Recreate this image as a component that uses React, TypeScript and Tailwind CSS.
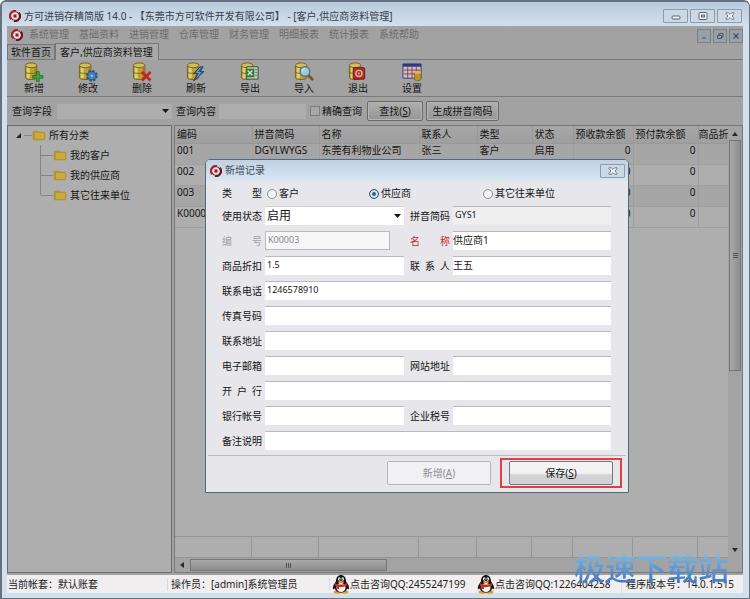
import { useState } from "react";
import type { ReactNode } from "react";
import clsx from "clsx";

const menus = ["系统管理", "基础资料", "进销管理", "仓库管理", "财务管理", "明细报表", "统计报表", "系统帮助"];

const columns = [
  { label: "编码", width: "w-[77px]" },
  { label: "拼音简码", width: "w-[67px]" },
  { label: "名称", width: "w-[100px]" },
  { label: "联系人", width: "w-[58px]" },
  { label: "类型", width: "w-[55px]" },
  { label: "状态", width: "w-[41px]" },
  { label: "预收款余额", width: "w-[60px]" },
  { label: "预付款余额", width: "w-[65px]" },
  { label: "商品折", width: "" },
];

const rows = [
  ["001", "DGYLWYGS", "东莞有利物业公司", "张三", "客户", "启用", "0", "0", ""],
  ["002", "", "", "", "", "", "0", "0", ""],
  ["003", "", "", "", "", "", "0", "0", ""],
  ["K00002", "", "", "", "", "", "0", "0", ""],
];

function Logo() {
  return (
    <svg viewBox="0 0 24 24" className="size-3 shrink-0" aria-hidden="true">
      <circle cx="12" cy="12" r="9" fill="#e8e2e5" />
      <path d="M14 2.500A9.500 9.500 0 0 0 5 18.500" fill="none" stroke="#a81f2e" strokeWidth="4.500" />
      <path d="M10 21.500A9.500 9.500 0 0 0 19 5.500" fill="none" stroke="#6d1321" strokeWidth="4.500" />
      <path d="M4 17l5 1v4ZM20 7l-5-1V2Z" fill="#8b1724" />
      <path d="M9 9h6v6H9z" fill="#8b1724" />
    </svg>
  );
}

function Cylinder() {
  return (
    <>
      <path d="M1.500 4v12.500c0 2.500 12 2.500 12 0V4Z" fill="#bfa12f" stroke="#75631f" />
      <path d="M4.500 5v12" stroke="#dfcf7c" strokeWidth="3" />
      <path d="M12 5v12" stroke="#a18524" strokeWidth="2" />
      <ellipse cx="7.500" cy="3.500" rx="6" ry="2.500" fill="#d2bd58" stroke="#75631f" />
      <path d="M1.500 10.500c0 2 12 2 12 0" fill="none" stroke="#80691a" />
    </>
  );
}

const tools: { label: string; icon: ReactNode }[] = [
  {
    label: "新增",
    icon: (
      <>
        <Cylinder />
        <path d="M13 10h3v4h4v3h-4v4h-3v-4H9v-3h4Z" fill="#3fa33c" stroke="#1d6023" strokeWidth=".7" />
      </>
    ),
  },
  {
    label: "修改",
    icon: (
      <>
        <Cylinder />
        <circle cx="14.500" cy="14.500" r="5" fill="none" stroke="#285b91" strokeWidth="2.500" strokeDasharray="2.400 1.500" />
        <circle cx="14.500" cy="14.500" r="4.300" fill="#4a8ac6" stroke="#214e80" />
        <circle cx="14.500" cy="14.500" r="1.700" fill="#bac6cd" stroke="#214e80" strokeWidth=".6" />
      </>
    ),
  },
  {
    label: "删除",
    icon: (
      <>
        <Cylinder />
        <path d="m10.500 10.500 9 9m0-9-9 9" stroke="#bd2a1e" strokeWidth="3" />
      </>
    ),
  },
  {
    label: "刷新",
    icon: (
      <>
        <Cylinder />
        <path d="M15 5 8 12h4l-4 8 11-10h-4l3-5Z" fill="#3464a5" stroke="#18345f" strokeWidth=".8" />
        <path d="m15 6-4 5h4l-3 5" fill="none" stroke="#94b5d2" strokeWidth=".8" />
      </>
    ),
  },
  {
    label: "导出",
    icon: (
      <>
        <Cylinder />
        <path d="M7 5h12v13H7Z" fill="#c1c9bc" stroke="#27592b" />
        <path d="M6 7h9v9H6Z" fill="#34753b" />
        <path d="m8 9 5 5m0-5-5 5" stroke="#dce6d8" strokeWidth="1.500" />
        <path d="M16 8h2m-2 3h2m-2 3h2" stroke="#527c4e" />
      </>
    ),
  },
  {
    label: "导入",
    icon: (
      <>
        <Cylinder />
        <path d="m15 14 5 5" stroke="#80552c" strokeWidth="3" />
        <circle cx="11.500" cy="10" r="5" fill="#a3c7d7" stroke="#477a9b" strokeWidth="1.500" />
        <path d="M8.500 10a3 3 0 0 1 3-3" fill="none" stroke="#e1eef0" />
      </>
    ),
  },
  {
    label: "退出",
    icon: (
      <>
        <Cylinder />
        <rect x="5.500" y="6" width="12" height="12" rx="1" fill="#b42c20" stroke="#71170f" />
        <circle cx="11.500" cy="12" r="3.200" fill="none" stroke="#dcb2aa" strokeWidth="1.500" />
        <circle cx="11.500" cy="12" r="1" fill="#dcb2aa" />
      </>
    ),
  },
  {
    label: "设置",
    icon: (
      <>
        <path d="M1 2h19v15H1Z" fill="#c8c3c8" stroke="#263d83" />
        <path d="M1 2h19v3H1Z" fill="#263d83" />
        <path d="M2 8.500h17M2 12.500h17M6 5v12M10.500 5v12M15 5v12" stroke="#a3353c" />
        <path d="M13 11v7c0 2 7 2 7 0v-7Z" fill="#be9323" stroke="#77591a" strokeWidth=".7" />
        <ellipse cx="16.500" cy="11" rx="3.500" ry="1.500" fill="#d8bb50" />
      </>
    ),
  },
];

function Folder() {
  return (
    <svg viewBox="0 0 14 11" className="h-[11px] w-[14px] shrink-0" aria-hidden="true">
      <path d="M1 2q0-1 1-1h4l1 1h5q1 0 1 1v6q0 1-1 1H2q-1 0-1-1Z" fill="#b6972e" stroke="#a58b3a" strokeWidth=".5" />
      <path d="M3 3h9v6H3Z" fill="#c9aa3a" />
    </svg>
  );
}

function Penguin() {
  return (
    <svg viewBox="0 0 18 20" className="h-5 w-[18px] shrink-0" aria-hidden="true">
      <ellipse cx="5.500" cy="18" rx="4" ry="1.700" fill="#e79b1d" />
      <ellipse cx="12.500" cy="18" rx="4" ry="1.700" fill="#e79b1d" />
      <path d="M4 7C4-1 14-1 14 7c0 1 4 5 3 8-1 1-2-1-2-1 0 6-12 6-12 0 0 0-1 2-2 1-1-3 3-7 3-8Z" fill="#15161a" />
      <ellipse cx="9" cy="13.500" rx="4.500" ry="4.500" fill="#f6f6f4" />
      <ellipse cx="7.300" cy="5" rx="1.300" ry="1.800" fill="#fff" />
      <ellipse cx="10.700" cy="5" rx="1.300" ry="1.800" fill="#fff" />
      <circle cx="7.700" cy="5.200" r=".6" />
      <circle cx="10.300" cy="5.200" r=".6" />
      <ellipse cx="9" cy="8" rx="3" ry="1" fill="#efaa20" />
      <path d="M3 9c3 2 9 2 12 0v2.500c-3 1.500-6 2-8 1.500V15H5v-2.500L3 11.500Z" fill="#d12825" />
    </svg>
  );
}

function CloseGlyph() {
  return (
    <svg viewBox="0 0 12 10" className="h-2 w-[10px]" aria-hidden="true">
      <path d="M1 1h3l2 2 2-2h3v1L8.500 5 11 8v1H8L6 7 4 9H1V8l2.500-3L1 2Z" fill="#f3f6f9" stroke="#56616e" />
    </svg>
  );
}

const captionButton =
  "flex h-[14px] w-[25px] items-center justify-center rounded-[1px] border border-[#8d9bab] bg-[#cbd8e6]";

function TitleBar() {
  return (
    <header className="flex h-6 items-center justify-between bg-linear-to-b from-[#b9cbdc] to-[#d2dfec] pt-1 pr-[7px] pl-[7px]">
      <div className="flex items-center gap-[3px] text-[#35404c]">
        <Logo />
        <h1 className="whitespace-pre">方可进销存精简版 14.0 - 【东莞市方可软件开发有限公司】 - [客户,供应商资料管理]</h1>
      </div>
      <div className="flex gap-0.5">
        <button type="button" aria-label="最小化" className={captionButton}>
          <svg viewBox="0 0 10 8" className="h-2 w-[10px]">
            <rect x="1" y="4" width="8" height="3" rx="1" fill="#f3f6f9" stroke="#56616e" />
          </svg>
        </button>
        <button type="button" aria-label="最大化" className={captionButton}>
          <svg viewBox="0 0 10 8" className="h-2 w-[10px]">
            <rect x="1" y=".5" width="8" height="7" rx="1" fill="#f3f6f9" stroke="#56616e" />
            <rect x="3.500" y="3" width="3" height="2" fill="#c4d0dd" stroke="#56616e" />
          </svg>
        </button>
        <button type="button" aria-label="关闭" className={captionButton}>
          <CloseGlyph />
        </button>
      </div>
    </header>
  );
}

const childButton = "flex h-[14px] w-[14px] items-center justify-center border border-[#7c838b] bg-[#98a0a9]";

function MenuBar() {
  return (
    <div className="flex h-[17px] items-center justify-between pl-1">
      <nav className="flex items-center gap-[10px] text-[#6d6d6d]">
        <span className="-mr-1">
          <Logo />
        </span>
        {menus.map((m) => (
          <a key={m} href="#">
            {m}
          </a>
        ))}
      </nav>
      <div className="flex gap-0.5 self-end">
        <button type="button" aria-label="最小化子窗口" className={childButton}>
          <svg viewBox="0 0 8 8" className="size-2">
            <path d="M2 6h4" stroke="#4c545d" />
          </svg>
        </button>
        <button type="button" aria-label="还原子窗口" className={childButton}>
          <svg viewBox="0 0 8 8" className="size-2" fill="none" stroke="#4c545d">
            <path d="M3 3V1.500h4V5H5.500" />
            <path d="M1.500 3.500h4v3h-4Z" />
          </svg>
        </button>
        <button type="button" aria-label="关闭子窗口" className={childButton}>
          <svg viewBox="0 0 8 8" className="size-2">
            <path d="m1.500 1.500 5 5m0-5-5 5" stroke="#4c545d" strokeWidth="1.400" />
          </svg>
        </button>
      </div>
    </div>
  );
}

function Tabs() {
  return (
    <div className="flex h-[17px] items-end border-b border-[#777]">
      <button type="button" className="h-[15px] border border-b-0 border-[#777] bg-[#9d9d9d] px-[3px]">
        软件首页
      </button>
      <button type="button" className="-mb-px h-[17px] border border-b-0 border-[#777] bg-[#a8a8a8] pr-[5px] pl-1">
        客户,供应商资料管理
      </button>
    </div>
  );
}

function Toolbar() {
  return (
    <div className="flex h-[37px] border-b border-[#7b7b7b]">
      {tools.map((t) => (
        <button key={t.label} type="button" className="flex w-[54px] flex-col items-center pt-0.5">
          <svg viewBox="0 0 21 21" className="size-5" aria-hidden="true">
            {t.icon}
          </svg>
          <span className="leading-3">{t.label}</span>
        </button>
      ))}
    </div>
  );
}

const grayButton =
  "h-5 rounded-[2px] border border-[#686868] bg-linear-to-b from-[#aeaeae] to-[#969696] shadow-[inset_0_0_0_1px_#b5b5b5]";

function SearchBar() {
  return (
    <form className="flex h-7 items-center pl-[5px]">
      <label htmlFor="field" className="w-[45px]">
        查询字段
      </label>
      <div className="relative">
        <select id="field" className="block h-[15px] w-[115px] appearance-none bg-[#adadad]">
          <option></option>
        </select>
        <Caret />
      </div>
      <label htmlFor="keyword" className="ml-1 w-[43px]">
        查询内容
      </label>
      <input id="keyword" className="h-[15px] w-[87px] bg-[#adadad]" />
      <label className="ml-1 flex items-center gap-0.5">
        <input type="checkbox" className="size-[10px] appearance-none border border-[#7d7d7d] bg-[#a9a9a9]" />
        精确查询
      </label>
      <button type="button" className={clsx(grayButton, "ml-[5px] w-14")}>
        查找(<u>S</u>)
      </button>
      <button type="button" className={clsx(grayButton, "ml-[3px] w-[73px]")}>
        生成拼音简码
      </button>
    </form>
  );
}

function Caret() {
  return (
    <svg viewBox="0 0 7 4" className="pointer-events-none absolute top-1/2 right-[3px] h-1 w-[7px] -translate-y-1/2">
      <path d="M0 0h7L3.500 4Z" fill="#151515" />
    </svg>
  );
}

function CategoryTree() {
  return (
    <aside className="w-[165px] shrink-0 border border-[#6c6c6c] bg-[#aeaeae] px-2">
      <div className="flex h-[19px] items-center">
        <svg viewBox="0 0 6 6" className="size-[6px]">
          <path d="M5 0v5H0Z" fill="#222" />
        </svg>
        <span className="ml-0.5 w-2 border-t border-[#858585]" />
        <Folder />
        <span className="ml-[3px]">所有分类</span>
      </div>
      <ul className="ml-6">
        {["我的客户", "我的供应商", "其它往来单位"].map((name) => (
          <li key={name} className="group flex h-5 items-center">
            <span className="h-full w-px bg-[#858585] group-last:h-1/2 group-last:self-start" />
            <span className="w-3 border-t border-[#858585]" />
            <Folder />
            <span className="ml-[3px]">{name}</span>
          </li>
        ))}
      </ul>
    </aside>
  );
}

function DataGrid() {
  return (
    <section className="flex min-w-0 flex-1 flex-col border border-[#777] bg-[#aeaeae]">
      <div className="flex flex-1">
        <div className="flex min-w-0 flex-1 flex-col overflow-hidden">
          <table className="w-full table-fixed">
            <thead>
              <tr className="h-[17px] bg-linear-to-b from-[#a6a6a6] to-[#9f9f9f]">
                {columns.map((c) => (
                  <th
                    key={c.label}
                    className={clsx(
                      c.width,
                      "border-r border-b border-[#989898] pl-0.5 text-left font-normal whitespace-nowrap last:border-r-0 last:pl-0",
                    )}
                  >
                    {c.label}
                  </th>
                ))}
              </tr>
            </thead>
            <tbody>
              {rows.map((r) => (
                <tr key={r[0]} className="h-[21px] odd:bg-[#a6a6a6]">
                  {r.map((cell, i) => (
                    <td
                      key={i}
                      className={clsx(
                        "border-r border-b border-[#9f9f9f] px-0.5 align-top whitespace-nowrap last:border-r-0",
                        i > 5 && "text-right",
                      )}
                    >
                      {cell}
                    </td>
                  ))}
                </tr>
              ))}
            </tbody>
          </table>
          <div className="mt-auto flex h-[22px] border-y border-[#969696]">
            {columns.map((c) => (
              <span key={c.label} className={clsx(c.width, "shrink-0 border-r border-[#969696] last:border-r-0")} />
            ))}
          </div>
        </div>
        <div className="flex w-[14px] flex-col items-center bg-[#a3a3a3] py-1.5">
          <svg viewBox="0 0 6 4" className="h-1 w-[6px]">
            <path d="M0 4h6L3 0Z" fill="#292929" />
          </svg>
          <div className="mt-1 flex h-[231px] w-3 flex-col items-center justify-center gap-px border border-[#777] bg-linear-to-r from-[#a9a9a9] to-[#8d8d8d]">
            <span className="h-px w-[5px] bg-[#555]" />
            <span className="h-px w-[5px] bg-[#555]" />
            <span className="h-px w-[5px] bg-[#555]" />
          </div>
          <svg viewBox="0 0 6 4" className="mt-auto h-1 w-[6px]">
            <path d="M0 0h6L3 4Z" fill="#292929" />
          </svg>
        </div>
      </div>
      <div className="flex h-[14px] items-center bg-[#a3a3a3] pl-[5px]">
        <svg viewBox="0 0 4 6" className="h-[6px] w-1">
          <path d="M4 0v6L0 3Z" fill="#292929" />
        </svg>
        <div className="ml-1.5 flex h-3 w-[197px] items-center justify-center gap-px border border-[#777] bg-linear-to-b from-[#a9a9a9] to-[#8d8d8d]">
          <span className="h-[5px] w-px bg-[#555]" />
          <span className="h-[5px] w-px bg-[#555]" />
          <span className="h-[5px] w-px bg-[#555]" />
        </div>
      </div>
    </section>
  );
}

function StatusBar() {
  return (
    <footer className="flex h-[18px] items-center bg-[#f0eeef] whitespace-nowrap text-[#222]">
      <span className="w-[161px] border-r border-[#dddadb] pl-px">当前帐套：默认账套</span>
      <span className="w-[162px] border-r border-[#dddadb] pl-[3px]">操作员：[admin]系统管理员</span>
      <a href="#" className="flex w-[147px] items-center pl-0.5">
        <Penguin />
        点击咨询QQ:2455247199
      </a>
      <a href="#" className="flex w-[145px] items-center border-r border-[#dddadb]">
        <Penguin />
        点击咨询QQ:1226404258
      </a>
      <span className="pl-1">程序版本号：14.0.1.515</span>
    </footer>
  );
}

type FieldProps = {
  id: string;
  label: string;
  value?: string;
  side?: boolean;
  wide?: boolean;
  tone?: string;
  inputClass?: string;
  disabled?: boolean;
};

function FieldLabel({ id, label, tone }: { id: string; label: string; tone?: string }) {
  return (
    <label htmlFor={id} className={clsx("flex w-10 shrink-0 justify-between pt-1", tone)}>
      {label.includes(" ") ? label.split(" ").map((s) => <span key={s}>{s}</span>) : label}
    </label>
  );
}

function Field({ id, label, value = "", side, wide, tone, inputClass, disabled }: FieldProps) {
  const [text, setText] = useState(value);
  return (
    <div className={clsx("flex gap-[3px]", wide && "col-span-2")}>
      <FieldLabel id={id} label={label} tone={tone} />
      <input
        id={id}
        value={text}
        disabled={disabled}
        onChange={(e) => setText(e.target.value)}
        className={clsx(
          "h-[19px] min-w-0 flex-1 border-t border-[#b9b9bf] pb-[3px]",
          side ? "text-[10px]" : "px-0.5 text-[9px]",
          inputClass ?? "bg-white",
        )}
      />
    </div>
  );
}

function RecordDialog() {
  const [kind, setKind] = useState("供应商");
  return (
    <div
      role="dialog"
      aria-labelledby="dialog-title"
      className="absolute top-[157px] left-[203px] w-[424px] overflow-hidden rounded-t-[5px] border border-[#596878] bg-[#e6e6eb]"
    >
      <div className="flex h-[21px] items-center justify-between bg-linear-to-b from-[#c0d1e0] to-[#d8e6f2] pr-[3px] pl-1 text-[#3f4c59]">
        <div className="flex items-center gap-[3px]">
          <Logo />
          <h2 id="dialog-title">新增记录</h2>
        </div>
        <button type="button" aria-label="关闭对话框" className={captionButton}>
          <CloseGlyph />
        </button>
      </div>

      <form className="pb-1">
        <div className="grid grid-cols-[182px_1fr] gap-x-1.5 gap-y-1.5 pt-1.5 pr-[17px] pb-[5px] pl-4">
          <fieldset className="col-span-2 flex h-[13px] items-center">
            <legend className="float-left flex w-[45px] justify-between pr-[5px]">
              <span>类</span>
              <span>型</span>
            </legend>
            {["客户", "供应商", "其它往来单位"].map((k) => (
              <label key={k} className="flex w-[102px] items-center gap-0.5 last:ml-3 last:w-auto">
                <input
                  type="radio"
                  name="kind"
                  checked={kind === k}
                  onChange={() => setKind(k)}
                  className="size-[10px] appearance-none rounded-full border border-[#8e9297] bg-[#f5f5f7] checked:border-[#42606e] checked:bg-[#1f6a86] checked:shadow-[inset_0_0_0_2px_#d3e6ee]"
                />
                {k}
              </label>
            ))}
          </fieldset>

          <div className="flex gap-[3px]">
            <FieldLabel id="state" label="使用状态" />
            <div className="relative flex-1">
              <select
                id="state"
                className="block h-[19px] w-full appearance-none border-t border-[#d0d0d5] bg-white px-0.5 text-xs leading-4"
              >
                <option>启用</option>
                <option>停用</option>
              </select>
              <Caret />
            </div>
          </div>
          <Field id="pinyin" label="拼音简码" value="GYS1" inputClass="bg-[#efeff0]" />

          <Field
            id="code"
            label="编 号"
            value="K00003"
            tone="text-[#a3a3a7]"
            disabled
            inputClass="mr-[14px] border bg-[#f6f6f7] text-[#8b8b8f]"
          />
          <Field id="name" label="名 称" value="供应商1" side tone="text-[#c9252d]" />

          <Field id="discount" label="商品折扣" value="1.5" />
          <Field id="contact" label="联 系 人" value="王五" side />

          <Field id="phone" label="联系电话" value="1246578910" wide />
          <Field id="fax" label="传真号码" wide />
          <Field id="address" label="联系地址" wide />

          <Field id="email" label="电子邮箱" />
          <Field id="site" label="网站地址" />

          <Field id="bank" label="开 户 行" wide />

          <Field id="account" label="银行帐号" />
          <Field id="tax" label="企业税号" />

          <Field id="remark" label="备注说明" wide />
        </div>

        <div className="mx-0.5 flex items-center justify-end gap-[9px] border-t border-[#bcbcc2] pt-0.5 pr-1">
          <button
            type="button"
            disabled
            className="h-6 w-[104px] rounded-[2px] border border-[#b4b5b8] bg-[#f1f1f3] text-[#8f9094]"
          >
            新增(<u>A</u>)
          </button>
          <span className="border-2 border-[#dc4146] px-[7px] py-px">
            <button
              type="button"
              className="h-6 w-[104px] rounded-[2px] border border-[#77787b] bg-linear-to-b from-[#f3f3f3] from-50% to-[#d2d2d4] to-60%"
            >
              保存(<u>S</u>)
            </button>
          </span>
        </div>
      </form>
    </div>
  );
}

export default function App() {
  return (
    <div className="relative flex min-h-screen flex-col overflow-hidden rounded-t-md border-t-2 border-r border-b border-l-2 border-[#65717e] bg-[#d2dfec] font-['Noto_Sans','Noto_Sans_CJK_SC',sans-serif] text-[10px] leading-[13px] text-[#151515]">
      <TitleBar />
      <div className="mr-[6px] mb-[5px] ml-[5px] flex flex-1 flex-col bg-[#a2a2a2]">
        <MenuBar />
        <Tabs />
        <Toolbar />
        <SearchBar />
        <main className="flex flex-1 gap-0.5 pb-0.5">
          <CategoryTree />
          <DataGrid />
        </main>
        <StatusBar />
      </div>
      <RecordDialog />
      <div className="pointer-events-none absolute right-5 bottom-3 bg-linear-to-b from-[#80c6f0] to-[#3d6fb8] bg-clip-text text-[31px] leading-9 font-medium text-transparent">
        极速下载站
      </div>
    </div>
  );
}
